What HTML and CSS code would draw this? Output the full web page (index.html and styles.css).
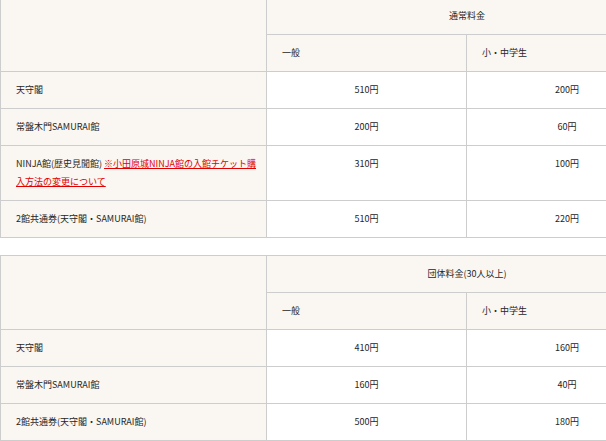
FILE: index.html
```html
<!DOCTYPE html>
<html lang="ja">
<head>
<meta charset="utf-8">
<link rel="stylesheet" href="styles.css">
</head>
<body>
<div class="page">
  <table class="fee fee-first">
    <colgroup><col class="c1"><col class="c2"><col class="c3"></colgroup>
    <tr>
      <th rowspan="2" class="blank"></th>
      <th colspan="2" class="group">通常料金</th>
    </tr>
    <tr>
      <th class="sub">一般</th>
      <th class="sub">小・中学生</th>
    </tr>
    <tr><th class="name">天守閣</th><td>510円</td><td>200円</td></tr>
    <tr><th class="name">常盤木門SAMURAI館</th><td>200円</td><td>60円</td></tr>
    <tr><th class="name">NINJA館(歴史見聞館) <a href="#" class="notice">※小田原城NINJA館の入館チケット購入方法の変更について</a></th><td>310円</td><td>100円</td></tr>
    <tr><th class="name">2館共通券(天守閣・SAMURAI館)</th><td>510円</td><td>220円</td></tr>
  </table>
  <table class="fee">
    <colgroup><col class="c1"><col class="c2"><col class="c3"></colgroup>
    <tr>
      <th rowspan="2" class="blank"></th>
      <th colspan="2" class="group">団体料金(30人以上)</th>
    </tr>
    <tr>
      <th class="sub">一般</th>
      <th class="sub">小・中学生</th>
    </tr>
    <tr><th class="name">天守閣</th><td>410円</td><td>160円</td></tr>
    <tr><th class="name">常盤木門SAMURAI館</th><td>160円</td><td>40円</td></tr>
    <tr><th class="name">2館共通券(天守閣・SAMURAI館)</th><td>500円</td><td>180円</td></tr>
  </table>
</div>
</body>
</html>
```
FILE: styles.css
```css
html, body {
  margin: 0;
  padding: 0;
  background: #fff;
  overflow: hidden;
}
.page {
  width: 606px;
  overflow: hidden;
  font-family: "Noto Sans CJK JP", sans-serif;
  font-size: 9px;
  color: #262626;
}
.fee {
  border-collapse: collapse;
  table-layout: fixed;
  width: 667px;
  margin: 0 0 17px 0;
  border: 1px solid #cdcdcd;
}
.fee-first {
  margin-top: -3px;
}
.c1 { width: 266px; }
.c2 { width: 200px; }
.c3 { width: 201px; }
.fee th,
.fee td {
  border: 1px solid #cdcdcd;
  padding: 9px 15px;
  line-height: 18px;
  font-weight: normal;
  vertical-align: top;
}
.fee th {
  background: #faf6f1;
  text-align: left;
}
.fee th.name {
  padding-right: 6px;
}
.fee th.group {
  text-align: center;
  vertical-align: middle;
}
.fee th.sub {
  vertical-align: middle;
}
.fee td {
  background: #fff;
  text-align: center;
}
.notice {
  color: #e00000;
  text-decoration: underline;
}
```
